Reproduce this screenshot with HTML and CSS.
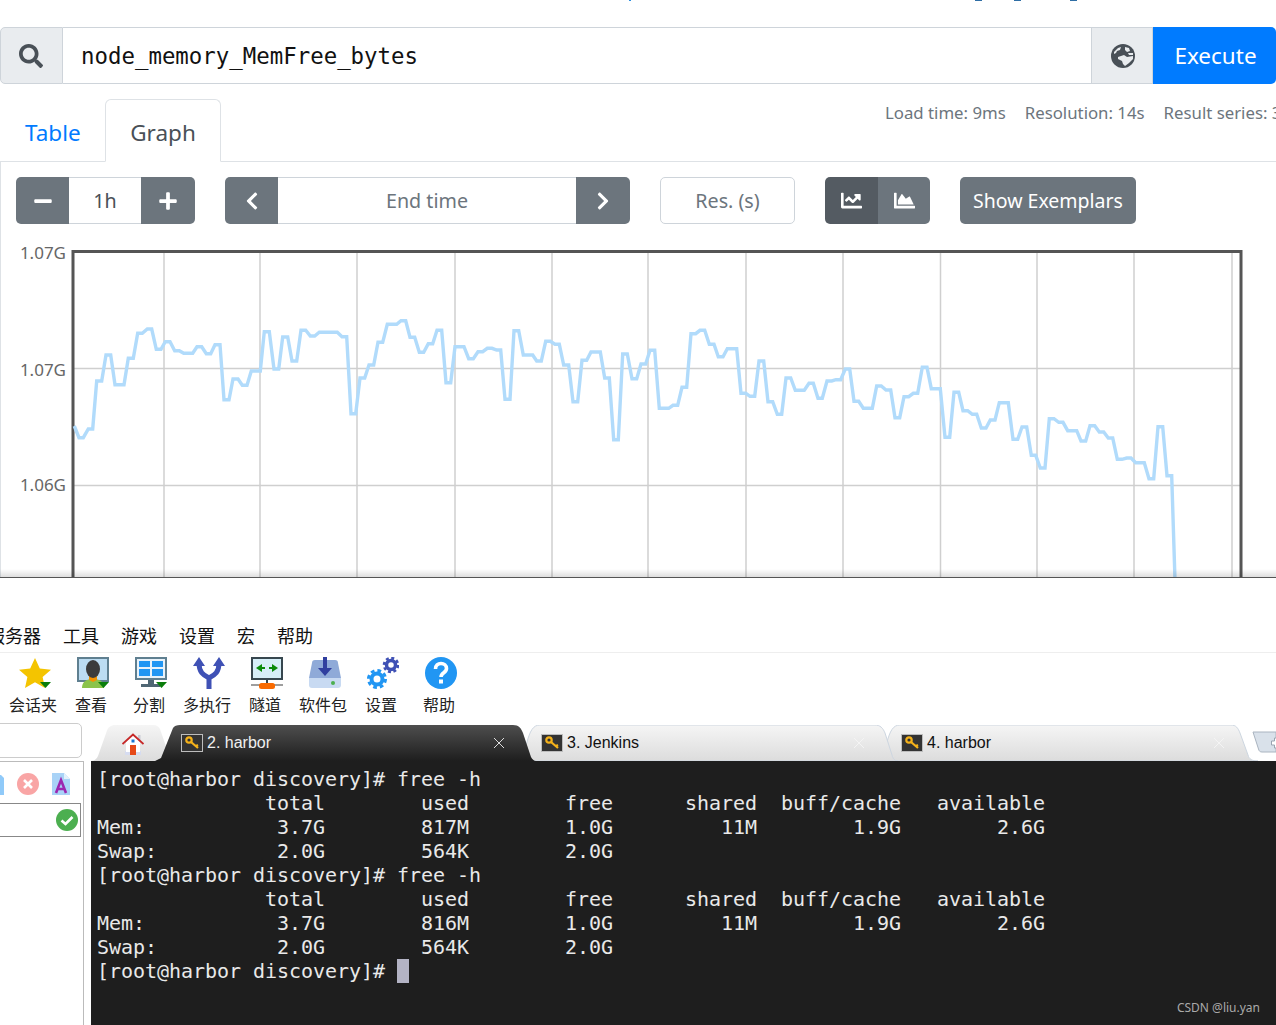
FILE: index.html
```html
<!DOCTYPE html>
<html lang="zh">
<head>
<meta charset="utf-8">
<title>node_memory_MemFree_bytes</title>
<link rel="stylesheet" href="styles.css">
</head>
<body>
<svg class="defs" aria-hidden="true">
  <defs>
    <linearGradient id="gDark" x1="0" y1="0" x2="0" y2="1"><stop offset="0" stop-color="#4e4e4e"/><stop offset="1" stop-color="#1e1e1e"/></linearGradient>
    <linearGradient id="gLight" x1="0" y1="0" x2="0" y2="1"><stop offset="0" stop-color="#f5f5f5"/><stop offset="1" stop-color="#dcdcdc"/></linearGradient>
  </defs>
</svg>
<section class="prom">
  <div class="strip">
    <i class="frag frag-a"></i><i class="frag frag-b"></i><i class="frag frag-c"></i><i class="frag frag-d"></i>
  </div>
  <div class="query">
    <div class="addon addon-left">
      <svg class="ic24" viewBox="0 0 512 512"><path d="M505 442.7L405.3 343c-4.5-4.5-10.6-7-17-7H372c27.6-35.3 44-79.7 44-128C416 93.1 322.9 0 208 0S0 93.1 0 208s93.1 208 208 208c48.3 0 92.7-16.4 128-44v16.3c0 6.4 2.5 12.5 7 17l99.7 99.7c9.4 9.4 24.6 9.4 33.9 0l28.3-28.3c9.4-9.4 9.4-24.6.1-34zM208 336c-70.7 0-128-57.2-128-128 0-70.7 57.2-128 128-128 70.7 0 128 57.2 128 128 0 70.7-57.2 128-128 128z"/></svg>
    </div>
    <div class="expr">node_memory_MemFree_bytes</div>
    <div class="addon addon-right">
      <svg class="ic24" viewBox="0 0 24 24"><circle cx="12" cy="12" r="12"/><path class="land" d="M3 8l4-4 3-1-1 3-3 1-1 2-2 1zM14 3l4 1 1 3-3 1-2-2zM7 13l6-2 3 2 6-1 0 3-4 4-4 3-2-2-1-3-4-2zM17 9l5 0 0 2-4 0z"/></svg>
    </div>
    <div class="execute">Execute</div>
  </div>
  <div class="tabrow">
    <a class="tab-link">Table</a>
    <div class="tab-active">Graph</div>
    <div class="stats"><span>Load time: 9ms</span><span>Resolution: 14s</span><span>Result series: 3</span></div>
  </div>
  <div class="panel">
    <div class="controls">
      <div class="group g-range">
        <div class="btn btn-sq"><svg class="ic20" viewBox="0 0 448 512"><path d="M416 208H32c-17.67 0-32 14.33-32 32v32c0 17.67 14.33 32 32 32h384c17.67 0 32-14.33 32-32v-32c0-17.67-14.33-32-32-32z"/></svg></div>
        <div class="field f-range">1h</div>
        <div class="btn btn-sq2"><svg class="ic20" viewBox="0 0 448 512"><path d="M416 208H272V64c0-17.67-14.33-32-32-32h-32c-17.67 0-32 14.33-32 32v144H32c-17.67 0-32 14.33-32 32v32c0 17.67 14.33 32 32 32h144v144c0 17.67 14.33 32 32 32h32c17.67 0 32-14.33 32-32V304h144c17.67 0 32-14.33 32-32v-32c0-17.67-14.33-32-32-32z"/></svg></div>
      </div>
      <div class="group g-end">
        <div class="btn btn-sq"><svg class="ic20" viewBox="0 0 320 512"><path d="M34.52 239.03L228.87 44.69c9.37-9.37 24.57-9.37 33.94 0l22.67 22.67c9.36 9.36 9.37 24.52.04 33.9L131.49 256l154.02 154.75c9.34 9.38 9.32 24.54-.04 33.9l-22.67 22.67c-9.37 9.37-24.57 9.37-33.94 0L34.52 272.97c-9.37-9.37-9.37-24.57 0-33.94z"/></svg></div>
        <div class="field f-end">End time</div>
        <div class="btn btn-sq2"><svg class="ic20" viewBox="0 0 320 512"><path d="M285.476 272.971L91.132 467.314c-9.373 9.373-24.569 9.373-33.941 0l-22.667-22.667c-9.357-9.357-9.375-24.522-.04-33.901L188.505 256 34.484 101.255c-9.335-9.379-9.317-24.544.04-33.901l22.667-22.667c9.373-9.373 24.569-9.373 33.941 0L285.475 239.03c9.373 9.372 9.373 24.568.001 33.941z"/></svg></div>
      </div>
      <div class="field f-res">Res. (s)</div>
      <div class="group g-type">
        <div class="btn btn-type btn-on"><svg class="ic21" viewBox="0 0 512 512"><path d="M496 384H64V80c0-8.84-7.16-16-16-16H16C7.16 64 0 71.16 0 80v336c0 17.67 14.33 32 32 32h464c8.84 0 16-7.16 16-16v-32c0-8.84-7.16-16-16-16zM464 96H345.94c-21.38 0-32.09 25.85-16.97 40.97l32.4 32.4L288 242.75l-73.37-73.37c-12.5-12.5-32.76-12.5-45.25 0l-68.69 68.69c-6.25 6.25-6.25 16.38 0 22.63l22.62 22.62c6.25 6.25 16.38 6.25 22.63 0L192 237.25l73.37 73.37c12.5 12.5 32.76 12.5 45.25 0l96-96 32.4 32.4c15.12 15.12 40.97 4.41 40.97-16.97V112c.01-8.84-7.15-16-15.99-16z"/></svg></div>
        <div class="btn btn-type"><svg class="ic21" viewBox="0 0 512 512"><path d="M500 384c6.6 0 12 5.4 12 12v40c0 6.6-5.4 12-12 12H12c-6.6 0-12-5.4-12-12V76c0-6.6 5.4-12 12-12h40c6.6 0 12 5.4 12 12v308h436zM372.7 159.5L288 216l-85.3-113.7c-5.1-6.8-15.5-6.3-19.9 1L96 248v104h384l-89.9-187.8c-3.2-6.5-11.4-8.7-17.4-4.7z"/></svg></div>
      </div>
      <div class="btn btn-text">Show Exemplars</div>
    </div>
    <svg class="chart" viewBox="0 224 1276 353" width="1276" height="353">
      <g class="grid">
        <path d="M164 251V577M260 251V577M357 251V577M455 251V577M552 251V577M648 251V577M746 251V577M843 251V577M940.500 251V577M1037 251V577M1134 251V577M1232 251V577M73 368.500H1241M73 485.500H1241"/>
      </g>
      <path class="frame" d="M73 577V251.500H1241V577"/>
      <text class="tick" x="66" y="259">1.07G</text>
      <text class="tick" x="66" y="376">1.07G</text>
      <text class="tick" x="66" y="491">1.06G</text>
      <polyline class="series" points="74.300,426 79,437.700 83.300,437.700 88.300,429 92.700,429 96.700,381 101.700,381 106,355 110.700,355 115,384.700 124,384.700 128.300,358.300 133.300,358.300 137.700,333.300 142.300,333.300 147.300,329 151.700,329 156.300,349.300 161,349.300 165.300,341.700 170,341.700 174.700,350.700 179.300,350.700 183.700,353.300 192.700,353.300 197,346.700 201.700,346.700 206.300,353.700 210.700,353.700 215,344.700 220,344.700 224,399.700 229,399.700 233,379 238,379 242.300,385.300 247,385.300 251.300,371 260.300,371 264.300,331.700 269.300,331.700 274,369 278.700,369 282.700,337 287.700,337 292,361 296.700,361 301,330.300 305.700,330.300 310.300,336 314.700,336 319.300,332.300 337.300,332.300 342,336.700 346.700,336.700 351,413.700 355.700,413.700 360,378 364.700,378 369,365 373.700,365 378,342.300 382.700,342.300 387.300,324.300 396.700,324.300 401,320.700 405.700,320.700 410,337.300 414.700,337.300 419.300,352.300 423.700,352.300 428.300,343.700 432.700,343.700 437,330.300 441.700,330.300 446,382.700 450.700,382.700 455,346.700 464,346.700 468.700,358.700 473.300,358.700 478,351.700 482.700,351.700 487.300,348.300 492,348.300 496.700,350 500.700,350 505,399.300 510,399.300 514,330.700 518.700,330.700 523.300,355 532.700,355 536.700,361 541.300,361 545.700,341.300 550.300,341.300 555,344.300 559.300,344.300 563.700,365 568.700,365 573,401.700 577.700,401.700 582,360.300 586.700,360.300 591,352 600.300,352 604.700,378 609.300,378 613.700,439.700 618.300,439.700 622.700,354 627.300,354 632,378.700 636.700,378.700 641,364 645.700,364 650,350.300 654.700,350.300 659.300,408.300 668.700,408.300 673,405.300 677.700,405.300 682,387.300 686.700,387.300 691,333.700 695.700,333.700 700,330.300 704.700,330.300 709.300,344.300 714,344.300 718.300,356.700 723,356.700 727.300,348.700 736.700,348.700 741,393.300 745.700,393.300 750,396.300 754.700,396.300 759,361 763.700,361 768,401.700 772.700,401.700 777.300,414.300 781.700,414.300 786,378 790.700,378 795.300,390.300 804.300,390.300 809,383.300 813.300,383.300 818,398.300 822.300,398.300 827,381 831.700,381 836,379.700 840.700,379.700 845.300,369 849.700,369 854,401.300 858.700,401.300 863.300,408.300 872.300,408.300 876.700,386 881.300,386 886,390 890.700,390 895,417.700 899.700,417.700 904,396.700 908.700,396.700 913.300,393.300 917.700,393.300 922.300,367.300 927,367.300 931.300,388.700 940.300,388.700 945,437.300 949.700,437.300 954,392.300 958.700,392.300 963,410.700 967.700,410.700 972.300,414.300 976.700,414.300 981.300,428 986,428 990.300,420 995,420 999.300,402.700 1008.300,402.700 1013,439.300 1017.700,439.300 1022,427 1026.700,427 1031.300,455.300 1035.700,455.300 1040.300,468 1045,468 1049.300,418.700 1054,418.700 1058.700,422.300 1063,422.300 1067.700,430.700 1076.700,430.700 1081,441 1085.700,441 1090,425.700 1094.700,425.700 1099.300,432 1103.700,432 1108.300,438 1112.700,438 1117.300,459.300 1122,459.300 1126.700,458 1131,458 1135.700,462.700 1144.300,462.700 1149,478.700 1153.700,478.700 1158,426.700 1162.700,426.700 1167,475.700 1171.700,475.700 1175,580"/>
    </svg>
  </div>
  <div class="fade"></div>
</section>

<section class="moba">
  <nav class="menu"><span class="menu-first">服务器</span><span>工具</span><span>游戏</span><span>设置</span><span>宏</span><span>帮助</span></nav>
  <div class="toolbar">
    <div class="tool">
      <svg class="tool-ic" viewBox="0 0 32 32"><path fill="#f4c400" d="M16 1l4.800 10.500 11.200 1.200-8.400 7.300 2.400 11-10-5.700-10 5.700 2.400-11L0 12.700l11.200-1.200z"/><path fill="#0a7d0a" d="M21 25h11l-5.500 6z"/></svg>
      <span>会话夹</span>
    </div>
    <div class="tool">
      <svg class="tool-ic" viewBox="0 0 32 32"><rect x="0" y="0" width="32" height="25" fill="#5f7f90"/><rect x="2" y="2" width="28" height="21" fill="#bcdcf2"/><path fill="#8bc34a" d="M5 31c0-6 4-9 11-9s11 3 11 9z"/><path fill="#f39200" d="M12 17h8v6l-4 2-4-2z"/><ellipse cx="16" cy="12" rx="7" ry="9" fill="#3b3b3b"/><path fill="#0a7d0a" d="M21 25h11l-5.500 6z"/></svg>
      <span>查看</span>
    </div>
    <div class="tool">
      <svg class="tool-ic" viewBox="0 0 32 32"><rect x="0" y="0" width="32" height="23" fill="#5f7f90"/><rect x="2" y="2" width="28" height="19" fill="#e8f2fa"/><path fill="#2196f3" d="M4 4h11v6H4zM17 4h11v6H17zM4 12h11v7H4zM17 12h11v7H17z"/><path fill="#4f6673" d="M13 23h6v4h6v3H6v-3h7z"/><path fill="#0a7d0a" d="M21 25h11l-5.500 6z"/></svg>
      <span>分割</span>
    </div>
    <div class="tool">
      <svg class="tool-ic" viewBox="0 0 32 32"><path fill="none" stroke="#3f51b5" stroke-width="5" d="M16 32V21M6 6c0 9 4 12 10 15M26 6c0 9-4 12-10 15"/><path fill="#3f51b5" d="M0 9L6 0l6 9zM20 9l6-9 6 9z"/></svg>
      <span>多执行</span>
    </div>
    <div class="tool">
      <svg class="tool-ic" viewBox="0 0 32 32"><rect x="0" y="0" width="32" height="23" fill="#37474f"/><rect x="2" y="2" width="28" height="19" fill="#d6eef8"/><path fill="#0a8a0a" d="M5 11l6-4v3h3v2h-3v3zM27 11l-6-4v3h-3v2h3v3z"/><rect x="15" y="23" width="2" height="4" fill="#37474f"/><rect x="0" y="27" width="32" height="2" fill="#9e9e9e"/><rect x="8" y="26" width="16" height="6" rx="2.500" fill="#f96a00"/></svg>
      <span>隧道</span>
    </div>
    <div class="tool">
      <svg class="tool-ic" viewBox="0 0 32 32"><path fill="#8faad8" d="M6 3h20c2 0 3 1 3 3l3 15H0L3 6c0-2 1-3 3-3z"/><path fill="#c8daf2" d="M0 21h32v7c0 2-1 3-3 3H3c-2 0-3-1-3-3z"/><circle cx="24" cy="26" r="2" fill="#4caf50"/><path fill="#303f9f" d="M14 0h4v11h5l-7 8-7-8h5z"/></svg>
      <span>软件包</span>
    </div>
    <div class="tool">
      <svg class="tool-ic" viewBox="0 0 32 32"><g fill="none"><circle cx="10" cy="22" r="5.500" stroke="#2196f3" stroke-width="4"/><circle cx="10" cy="22" r="8.500" stroke="#2196f3" stroke-width="3" stroke-dasharray="3.700 3"/><circle cx="24" cy="8" r="4.500" stroke="#3f51b5" stroke-width="3.500"/><circle cx="24" cy="8" r="7" stroke="#3f51b5" stroke-width="2.600" stroke-dasharray="3 2.500"/></g></svg>
      <span>设置</span>
    </div>
    <div class="tool">
      <svg class="tool-ic" viewBox="0 0 32 32"><circle cx="16" cy="16" r="16" fill="#2196f3"/><path fill="none" stroke="#fff" stroke-width="3.600" d="M10.500 12c0-3.500 2.500-5.500 5.500-5.500s5.500 2 5.500 5c0 4.500-5.500 4-5.500 8.500"/><rect x="14" y="22.500" width="4" height="4" fill="#fff"/></svg>
      <span>帮助</span>
    </div>
  </div>
  <div class="work">
    <aside class="side">
      <div class="side-search"></div>
      <div class="side-panel">
        <div class="side-icons">
          <svg class="side-file" viewBox="0 0 4 22"><path fill="#90caf9" d="M0 2h1l3 3v17H0z"/></svg>
          <svg class="side-x" viewBox="0 0 22 22"><circle cx="11" cy="11" r="11" fill="#f9a5a5"/><path stroke="#fff" stroke-width="2.600" d="M7 7l8 8M15 7l-8 8"/></svg>
          <svg class="side-a" viewBox="0 0 18 22"><path fill="#a9d3f7" d="M0 0h12l6 6v16H0z"/><path fill="#e3f1fc" d="M12 0l6 6h-6z"/><path fill="none" stroke="#9c27b0" stroke-width="2.600" d="M4 20L9 7l5 13M6 16h6"/></svg>
        </div>
        <div class="side-input">
          <svg class="side-ok" viewBox="0 0 22 22"><circle cx="11" cy="11" r="11" fill="#4caf50"/><path fill="none" stroke="#fff" stroke-width="2.600" d="M5.500 11.500l4 3.500 7-7"/></svg>
        </div>
      </div>
    </aside>
    <div class="term-wrap">
      <div class="tabs">
        <div class="stab stab-home">
          <svg class="shape" viewBox="0 0 80 36"><path class="shape-light" d="M0 36C4 36 6 33 7 31L15.500 7C17 2 20 0 24 0H62C66 0 68 2 69 4L80 36Z"/></svg>
          <svg class="home-ic" viewBox="0 0 22 22"><path fill="#d6dcf0" d="M3 18h16v4H3z"/><path fill="#fff" d="M4 9l7-6 7 6v10H4z"/><rect x="16" y="2" width="2.500" height="5" fill="#c9cbd6"/><path fill="none" stroke="#c62828" stroke-width="1.800" d="M0.500 11L11 1.500 21.500 11"/><rect x="8" y="12" width="6" height="10" fill="#e64a19"/><rect x="9.500" y="6.500" width="3" height="3" fill="#1976d2"/></svg>
        </div>
        <div class="stab stab-on">
          <svg class="shape" viewBox="0 0 381 36"><path class="shape-dark" d="M0 36L6 33L18 3C19 1 22 0 25 0H358C364 0 366 3 368 8L376 32C377 34 379 36 381 36Z"/></svg>
          <svg class="key" viewBox="0 0 22 18"><rect x=".5" y=".5" width="21" height="17" fill="#333" stroke="#bdbdbd"/><path fill="none" stroke="#f5b21a" stroke-width="2.200" d="M10 8l7 6M15 12l2-1"/><circle cx="8" cy="6" r="2.700" fill="none" stroke="#f5b21a" stroke-width="2.200"/></svg>
          <span class="stitle">2. harbor</span>
          <svg class="sx" viewBox="0 0 10 10"><path d="M0 0l10 10M10 0L0 10"/></svg>
        </div>
        <div class="stab stab-off stab-j">
          <svg class="shape" viewBox="0 0 378 36"><path class="shape-light shape-line" d="M0 36L6.700 18C10 6 13 0 20 0H355C360 0 363 3 365 8L372 30C373 34 375 36 378 36Z"/></svg>
          <svg class="key" viewBox="0 0 22 18"><rect x=".5" y=".5" width="21" height="17" fill="#333" stroke="#bdbdbd"/><path fill="none" stroke="#f5b21a" stroke-width="2.200" d="M10 8l7 6M15 12l2-1"/><circle cx="8" cy="6" r="2.700" fill="none" stroke="#f5b21a" stroke-width="2.200"/></svg>
          <span class="stitle">3. Jenkins</span>
          <svg class="sx" viewBox="0 0 10 10"><path d="M0 0l10 10M10 0L0 10"/></svg>
        </div>
        <div class="stab stab-off stab-h">
          <svg class="shape" viewBox="0 0 378 36"><path class="shape-light shape-line" d="M0 36L6.700 18C10 6 13 0 20 0H351C356 0 358 3 360 8L368 30C369 34 372 36 378 36Z"/></svg>
          <svg class="key" viewBox="0 0 22 18"><rect x=".5" y=".5" width="21" height="17" fill="#333" stroke="#bdbdbd"/><path fill="none" stroke="#f5b21a" stroke-width="2.200" d="M10 8l7 6M15 12l2-1"/><circle cx="8" cy="6" r="2.700" fill="none" stroke="#f5b21a" stroke-width="2.200"/></svg>
          <span class="stitle">4. harbor</span>
          <svg class="sx" viewBox="0 0 10 10"><path d="M0 0l10 10M10 0L0 10"/></svg>
        </div>
        <div class="stab-new">
          <svg class="shape" viewBox="0 0 24 36"><path fill="#d9e1ea" stroke="#aab4c0" d="M1 7H24V27H10C8 27 7 26 6.500 24Z"/><path fill="#fff" stroke="#9aa4b0" d="M19.500 16h3v-3h2v10h-2v-3h-3z"/></svg>
        </div>
      </div>
      <div class="terminal">
<pre class="term-text">[root@harbor discovery]# free -h
              total        used        free      shared  buff/cache   available
Mem:           3.7G        817M        1.0G         11M        1.9G        2.6G
Swap:          2.0G        564K        2.0G
[root@harbor discovery]# free -h
              total        used        free      shared  buff/cache   available
Mem:           3.7G        816M        1.0G         11M        1.9G        2.6G
Swap:          2.0G        564K        2.0G
[root@harbor discovery]# <span class="cursor"> </span></pre>
        <div class="watermark">CSDN @liu.yan</div>
      </div>
    </div>
  </div>
</section>
</body>
</html>
```
FILE: styles.css
```css
* { box-sizing: border-box; }
html, body { margin: 0; padding: 0; }
body {
  width: 1276px;
  height: 1025px;
  overflow: hidden;
  background: #fff;
  font-family: "Noto Sans", "Open Sans", sans-serif;
  position: relative;
}
.defs { position: absolute; width: 0; height: 0; }

/* upper: Prometheus */
.prom {
  position: relative;
  height: 578px;
  overflow: hidden;
  border-bottom: 1px solid #555;
}
.strip { height: 27px; display: flex; align-items: flex-start; }
.frag { display: block; height: 1px; }
.frag-a { width: 2px; margin-left: 629px; background: #2b8fe0; }
.frag-b { width: 7px; margin-left: 344px; background: #2f6ea5; }
.frag-c { width: 7px; margin-left: 32px; background: #2f6ea5; }
.frag-d { width: 7px; margin-left: 49px; background: #2f6ea5; }

.query { display: flex; height: 57px; }
.addon {
  display: flex; align-items: center; justify-content: center;
  background: #e9ecef;
  border: 1px solid #ced4da;
}
.addon svg { fill: #495057; }
.addon-left { width: 63px; padding-right: 2px; border-radius: 5px 0 0 5px; }
.addon-right { width: 62px; padding-left: 2px; }
.land { fill: #e9ecef; }
.ic24 { width: 24px; height: 24px; display: block; }
.ic20 { width: 20px; height: 20px; display: block; fill: #fff; }
.ic21 { width: 21px; height: 21px; display: block; fill: #fff; }
.expr {
  flex: 1;
  border-top: 1px solid #ced4da;
  border-bottom: 1px solid #ced4da;
  padding-left: 18px;
  font: 22.4px/56px "DejaVu Sans Mono", monospace;
  color: #111;
}
.execute {
  width: 123px;
  background: #007bff;
  color: #fff;
  font-size: 22.500px;
  line-height: 58px;
  padding-left: 2px;
  text-align: center;
  border-radius: 0 5px 5px 0;
}

.tabrow {
  display: flex;
  height: 78px;
  padding-top: 15px;
  border-bottom: 1px solid #dee2e6;
  font-size: 22.500px;
}
.tab-link { flex: none; width: 105px; padding: 19px 0 0 25px; color: #007bff; line-height: 30px; }
.tab-active {
  flex: none;
  width: 116px;
  height: 63px;
  border: 1px solid #dee2e6;
  border-bottom-color: #fff;
  border-radius: 6px 6px 0 0;
  background: #fff;
  color: #495057;
  text-align: center;
  line-height: 66px;
}
.stats {
  flex: none;
  display: flex;
  gap: 19px;
  margin-left: 664px;
  margin-top: -13px;
  white-space: nowrap;
  font-size: 16.800px;
  line-height: 54px;
  height: 54px;
  color: #6c757d;
}

.panel { border-left: 1px solid #dee2e6; padding-top: 15px; }
.controls { display: flex; gap: 30px; padding-left: 15px; height: 47px; }
.group { display: flex; flex: none; border-radius: 5px; overflow: hidden; }
.btn {
  display: flex; align-items: center; justify-content: center;
  flex: none;
  background: #6c757d;
  color: #fff;
}
.btn-sq { width: 53px; }
.btn-sq2 { width: 54px; }
.field {
  display: flex; align-items: center; justify-content: center;
  flex: none;
  border: 1px solid #ced4da;
  color: #6c757d;
  font-size: 19.700px;
  background: #fff;
}
.f-range { width: 72px; border-width: 1px 0; color: #495057; }
.f-end { width: 298px; border-width: 1px 0; }
.f-res { width: 135px; border-radius: 5px; }
.btn-type { width: 53px; }
.btn-type + .btn-type { width: 52px; }
.btn-on { background: #545b62; }
.btn-text { width: 176px; font-size: 19.500px; border-radius: 5px; }

.chart { display: block; margin-left: -1px; }
.grid path { fill: none; stroke: #cfcfcf; stroke-width: 1.500; }
.frame { fill: none; stroke: #555; stroke-width: 3; }
.tick {
  font-size: 17px;
  fill: #666;
  text-anchor: end;
  font-family: "Noto Sans", sans-serif;
}
.series { fill: none; stroke: #b1dbfb; stroke-width: 3.400; stroke-linejoin: miter; }
.fade {
  position: absolute;
  left: 0; right: 0; bottom: 0;
  height: 8px;
  background: linear-gradient(rgba(0,0,0,0), rgba(0,0,0,.13));
}

/* lower: MobaXterm */
.menu {
  height: 75px;
  display: flex;
  align-items: flex-end;
  gap: 22px;
  padding-bottom: 4px;
  border-bottom: 1px solid #eee;
  font: 18px/26px "Noto Sans CJK SC", sans-serif;
  color: #111;
  white-space: nowrap;
}
.menu-first { margin-left: -13px; }
.toolbar {
  display: flex;
  height: 70px;
  padding: 4px 0 0 4px;
}
.tool {
  width: 58px;
  flex: none;
  display: flex;
  flex-direction: column;
  align-items: center;
  gap: 3px;
  font: 16px/24px "Noto Sans CJK SC", sans-serif;
  color: #222;
  white-space: nowrap;
}
.tool-ic { width: 32px; height: 32px; display: block; margin-left: 4px; }

.work { display: flex; height: 302px; }
.side { width: 91px; flex: none; overflow: hidden; }
.side-search {
  width: 92px;
  height: 35px;
  margin-left: -10px;
  border: 1px solid #ccc;
  border-radius: 5px;
}
.side-panel {
  width: 84px;
  height: 264px;
  margin-top: 3px;
  border-top: 1px solid #bbb;
  border-right: 1px solid #bbb;
}
.side-icons { display: flex; height: 41px; padding-top: 11px; }
.side-file { width: 4px; height: 22px; margin-right: 13px; }
.side-x { width: 22px; height: 22px; margin-right: 13px; }
.side-a { width: 18px; height: 22px; }
.side-input {
  height: 34px;
  width: 81px;
  margin-left: 0;
  border: 1.500px solid #888;
  border-left: 0;
  display: flex;
  align-items: center;
  justify-content: flex-end;
  padding-right: 2.500px;
}
.side-ok { width: 22px; height: 22px; display: block; }

.term-wrap { flex: 1; display: flex; flex-direction: column; padding-top: 2px; min-width: 0; }
.tabs { display: flex; height: 36px; flex: none; }
.stab {
  position: relative;
  height: 36px;
  flex: none;
  display: flex;
  align-items: center;
  font: 16px/20px "Liberation Sans", Arial, sans-serif;
}
.shape { position: absolute; left: 0; top: 0; width: 100%; height: 36px; }
.shape-dark { fill: url(#gDark); }
.shape-light { fill: url(#gLight); }
.shape-line { stroke: #cdd6e0; stroke-width: 1; }
.stab > *:not(.shape) { position: relative; }
.stab-home { width: 80px; margin-right: -16px; padding-left: 31px; }
.home-ic { width: 22px; height: 22px; margin-top: 2px; }
.stab-on { width: 381px; padding: 0 32px 0 26px; color: #f0f0f0; z-index: 3; }
.stab-off { width: 378px; padding: 0 34px 0 21px; color: #111; }
.stab-j { margin-left: -16px; z-index: 2; }
.stab-h { margin-left: -18px; z-index: 1; }
.key { width: 22px; height: 18px; margin-right: 4px; flex: none; }
.stitle { flex: 1; }
.sx { width: 10px; height: 10px; flex: none; stroke: #ddd; stroke-width: 1; fill: none; }
.stab-off .sx { stroke: #f4f4f4; }
.stab-new { position: relative; width: 24px; height: 36px; margin-left: -6px; flex: none; }

.terminal {
  position: relative;
  flex: 1;
  background: #1e1e1e;
  padding: 6px 0 0 6px;
  color: #e9e9e9;
  overflow: hidden;
}
.term-text {
  margin: 0;
  font: 20px/24px "DejaVu Sans Mono", monospace;
  letter-spacing: -0.04px;
  white-space: pre;
}
.cursor { background: #b3b3c4; }
.watermark {
  position: absolute;
  right: 16px;
  bottom: 10px;
  font: 12px/14px "Noto Sans", sans-serif;
  color: #aaa;
}
```
